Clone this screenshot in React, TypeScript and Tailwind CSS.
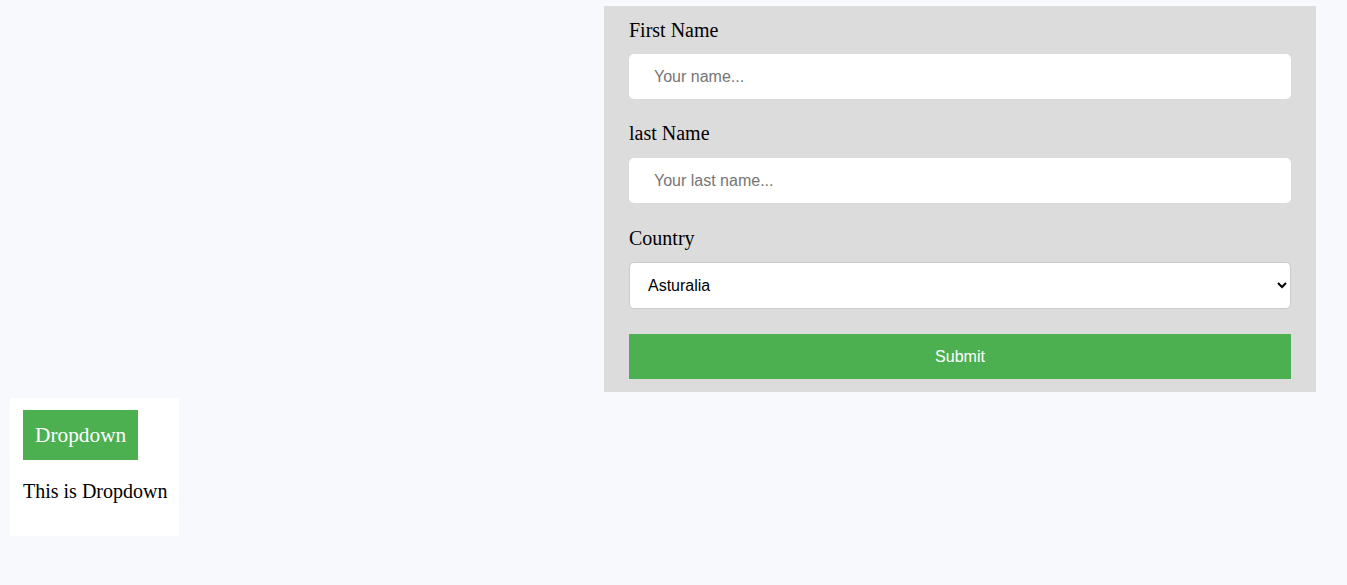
export default function App() {
  return (
    <div className="min-h-[585px] w-full bg-[#f8f9fd] pt-[6px]" style={{ fontFamily: '"Liberation Serif", serif' }}>
      {/* Form panel */}
      <div className="flex justify-end pr-[31px]">
        <form
          className="w-[712px] bg-[#dcdcdc] px-[25px] pt-[13px] pb-[13px]"
          onSubmit={(e) => e.preventDefault()}
        >
          <label className="block text-[20px] leading-[23px] text-black">First Name</label>
          <input
            type="text"
            placeholder="Your name..."
            className="mt-[12px] block h-[45px] w-full rounded-[5px] bg-white px-[25px] font-['Liberation_Sans',sans-serif] text-[16px] text-black placeholder:text-[#757575] outline-none"
          />

          <label className="mt-[23px] block text-[20px] leading-[23px] text-black">last Name</label>
          <input
            type="text"
            placeholder="Your last name..."
            className="mt-[13px] block h-[45px] w-full rounded-[5px] bg-white px-[25px] font-['Liberation_Sans',sans-serif] text-[16px] text-black placeholder:text-[#757575] outline-none"
          />

          <label className="mt-[24px] block text-[20px] leading-[23px] text-black">Country</label>
          <select
            defaultValue="australia"
            className="mt-[12px] block h-[47px] w-full rounded-[5px] border border-[#cccccc] bg-white pl-[14px] pr-[10px] font-['Liberation_Sans',sans-serif] text-[16px] text-black outline-none"
          >
            <option value="australia">Asturalia</option>
            <option value="canada">Canada</option>
            <option value="usa">USA</option>
          </select>

          <button
            type="submit"
            className="mt-[25px] block h-[45px] w-full bg-[#4caf50] font-['Liberation_Sans',sans-serif] text-[16px] text-white"
          >
            Submit
          </button>
        </form>
      </div>

      {/* Dropdown */}
      <div className="ml-[10px] mt-[6px] w-[169px] bg-white px-[13px] pt-[12px] pb-[33px]">
        <button className="flex h-[50px] items-center bg-[#4caf50] px-[12px] pt-[2px] text-[21.33px] text-white">
          Dropdown
        </button>
        <p className="mt-[20px] whitespace-nowrap text-[20px] leading-[23px] text-black">This is Dropdown</p>
      </div>
    </div>
  );
}
